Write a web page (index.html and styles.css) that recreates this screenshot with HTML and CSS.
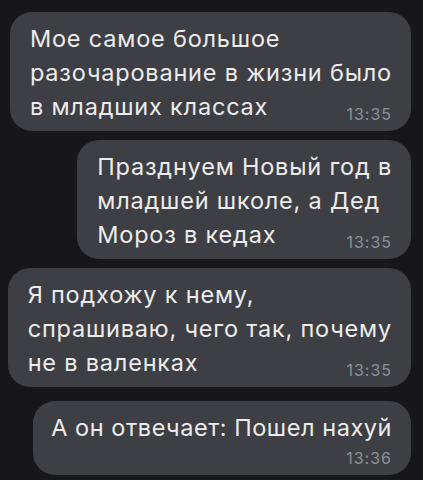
FILE: index.html
```html
<!DOCTYPE html>
<html lang="ru">
<head>
  <meta charset="UTF-8">
  <meta name="viewport" content="width=device-width, initial-scale=1">
  <link rel="stylesheet" href="styles.css">
</head>
<body>

  <div class="chat">
    <div class="bubble">
      <div class="text">Мое самое большое<br>разочарование в жизни было<br>в младших классах</div>
      <div class="time time-over">13:35</div>
    </div>

    <div class="bubble">
      <div class="text">Празднуем Новый год в<br>младшей школе, а Дед<br>Мороз в кедах</div>
      <div class="time time-over">13:35</div>
    </div>

    <div class="bubble">
      <div class="text">Я подхожу к нему,<br>спрашиваю, чего так, почему<br>не в валенках</div>
      <div class="time time-over">13:35</div>
    </div>

    <div class="bubble bubble-next">
      <div class="text text-tight">А он отвечает: Пошел нахуй</div>
      <div class="time">13:36</div>
    </div>
  </div>

</body>
</html>
```

FILE: styles.css
```css
body {
  margin: 0;
  background-color: #16161b;
  font-family: Inter, "Noto Sans", sans-serif;
}

.chat {
  display: flex;
  flex-direction: column;
  align-items: flex-end;
  gap: 9px;
  padding: 12px 12px 0 11px;
}

.bubble {
  background-color: #3e3f44;
  border-radius: 22px;
  padding: 10px 19px 8px 20px;
  white-space: nowrap;
}

.bubble-next {
  margin-top: 5px;
  padding-left: 18px;
}

.text {
  color: #ececec;
  font-size: 23.5px;
  letter-spacing: 0.8px;
  line-height: 34px;
}

.text-tight {
  letter-spacing: 0.55px;
}

.time {
  color: #8e8f94;
  font-size: 16px;
  letter-spacing: 1px;
  line-height: 18px;
  text-align: right;
  margin-top: 4px;
}

.time-over {
  margin-top: -19px;
}
```
